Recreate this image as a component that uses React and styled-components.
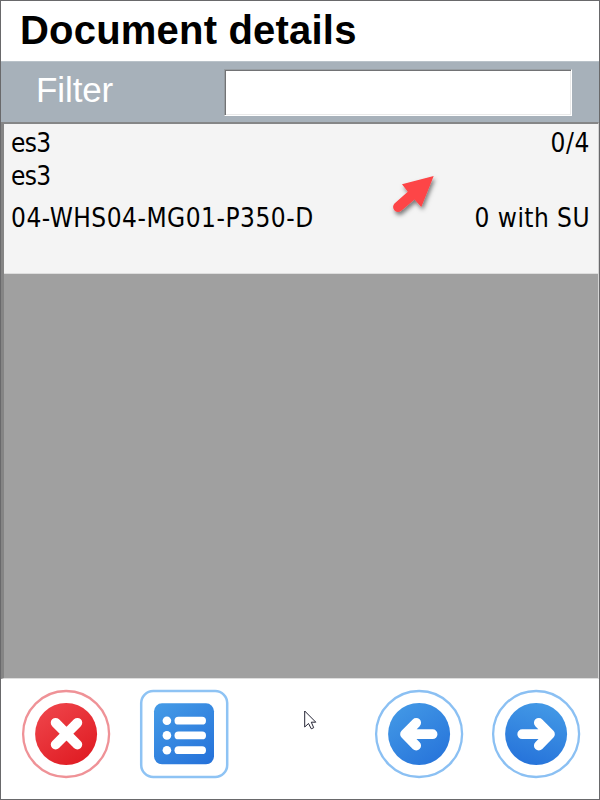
import React from "react";
import styled, { createGlobalStyle } from "styled-components";

const Global = createGlobalStyle`
  * { box-sizing: border-box; }
  body { margin: 0; background: #fff; }
`;

const Screen = styled.main`
  width: 600px;
  height: 800px;
  display: flex;
  flex-direction: column;
  border: 1px solid #69696b;
  background: #fff;
  overflow: hidden;
  position: relative;
  font-family: "Liberation Sans", Arial, sans-serif;
`;

const Header = styled.header`
  height: 60px;
  flex: none;
  padding-left: 19px;
`;

const Title = styled.h1`
  margin: 0;
  font-size: 40px;
  line-height: 59px;
  font-weight: 700;
  letter-spacing: 0.2px;
  color: #000;
  white-space: nowrap;
`;

const FilterBar = styled.section`
  height: 61px;
  flex: none;
  display: flex;
  align-items: flex-start;
  padding: 8px 27px 0 35px;
  background: #a7b1ba;
  border-top: 1px solid #b9c2c9;
`;

const FilterLabel = styled.label`
  width: 188px;
  font-size: 35px;
  line-height: 40px;
  letter-spacing: -0.1px;
  color: #fff;
`;

const FilterInput = styled.input`
  width: 348px;
  height: 47px;
  margin-top: -1px;
  padding: 0 8px;
  outline: 0;
  border-style: solid;
  border-width: 1px;
  border-color: #979da2 #fff #fff #979da2;
  border-radius: 0;
  background: #fff;
  box-shadow: inset 1px 1px 0 #727375, inset -1px -1px 0 #e9e9e9;
  font: 26px "DejaVu Sans Condensed", sans-serif;
`;

const List = styled.section`
  height: 557px;
  flex: none;
  background: #a0a0a0;
  border-top: 2px solid #858687;
  border-left: 3px solid #858585;
  border-right: 1px solid #d5d5d5;
  border-bottom: 1px solid #dedede;
`;

const Item = styled.article`
  height: 150px;
  padding: 3px 8px 0 7px;
  background: #f4f4f4;
  border-bottom: 1px solid #ddd;
`;

const Row = styled.div`
  display: flex;
  justify-content: space-between;
  height: ${(p) => p.$height}px;
  font-family: "DejaVu Sans Condensed", "DejaVu Sans", sans-serif;
  font-stretch: condensed;
  font-size: 26px;
  line-height: 33px;
  color: #000;
  white-space: nowrap;
`;

const Text = styled.span`
  letter-spacing: ${(p) => p.$spacing || 0}px;
`;

const Footer = styled.footer`
  flex: 1;
  display: flex;
  justify-content: space-between;
  align-items: flex-start;
  padding: 10px 18px 0 20px;
`;

const ButtonGroup = styled.div`
  display: flex;
  gap: ${(p) => p.$gap}px;
`;

const IconButton = styled.button`
  width: 90px;
  height: 90px;
  padding: 0;
  border: 0;
  background: none;
  svg { display: block; }
`;

const Pointer = styled.svg`
  position: absolute;
  left: ${(p) => p.$x}px;
  top: ${(p) => p.$y}px;
  overflow: visible;
`;

function Glyph({ kind }) {
  const id = `fill-${kind}`;
  const red = kind === "close";
  const list = kind === "list";
  return (
    <svg width="90" height="90" viewBox="0 0 90 90">
      <defs>
        <linearGradient id={id} x1={kind === "next" ? ".65" : ".15"} y1="0" x2={kind === "next" ? ".35" : ".85"} y2="1">
          <stop offset="0" stopColor={red ? "#ef454b" : "#4399e6"} />
          <stop offset="1" stopColor={red ? "#df1a21" : "#2673da"} />
        </linearGradient>
      </defs>
      {list ? (
        <>
          <rect x="2.2" y="2" width="86" height="86" rx="12" fill="#fff" stroke="#8ec3f4" strokeWidth="2.5" />
          <rect x="15" y="14.3" width="60" height="61" rx="8" fill={`url(#${id})`} />
          <g fill="#fff">
            {[31.7, 46.4, 61.2].map((y) => (
              <g key={y}>
                <circle cx="27.9" cy={y} r="4.3" />
                <rect x="35.5" y={y - 3.9} width="31.5" height="7.8" rx="3.9" />
              </g>
            ))}
          </g>
        </>
      ) : (
        <>
          <circle cx="45.1" cy="45" r="43" fill="#fff" stroke={red ? "#ef9297" : "#8bc0f3"} strokeWidth="2.3" />
          <circle cx="45.1" cy="45" r="31" fill={`url(#${id})`} />
          <g fill="none" stroke="#fff" strokeWidth="9.7" strokeLinecap="round" strokeLinejoin="round">
            {red && <path d="M34.6 33.8 56.4 55.6M56.4 33.8 34.6 55.6" />}
            {kind === "back" && <path d="M58.6 45.2H32M42.2 33.8 31 45.2 42.2 56.6" />}
            {kind === "next" && <path d="M31.2 45.2H58M47.8 33.8 59 45.2 47.8 56.6" />}
          </g>
        </>
      )}
    </svg>
  );
}

export default function App() {
  return (
    <>
      <Global />
      <Screen>
        <Header><Title>Document details</Title></Header>
        <FilterBar>
          <FilterLabel htmlFor="filter">Filter</FilterLabel>
          <FilterInput id="filter" />
        </FilterBar>
        <List>
          <Item>
            <Row $height={33}><Text $spacing={-0.7}>es3</Text><Text $spacing={0.6}>0/4</Text></Row>
            <Row $height={42}><Text $spacing={-0.7}>es3</Text></Row>
            <Row $height={33}><Text $spacing={0.5}>04-WHS04-MG01-P350-D</Text><Text $spacing={0.45}>0 with SU</Text></Row>
          </Item>
        </List>
        <Footer>
          <ButtonGroup $gap={28}>
            <IconButton aria-label="Close"><Glyph kind="close" /></IconButton>
            <IconButton aria-label="List"><Glyph kind="list" /></IconButton>
          </ButtonGroup>
          <ButtonGroup $gap={27}>
            <IconButton aria-label="Back"><Glyph kind="back" /></IconButton>
            <IconButton aria-label="Next"><Glyph kind="next" /></IconButton>
          </ButtonGroup>
        </Footer>
        <Pointer $x={391} $y={174} width="48" height="48" viewBox="392 175 48 48">
          <defs>
            <filter id="shadow" x="-30%" y="-30%" width="170%" height="170%">
              <feDropShadow dx="1.5" dy="3" stdDeviation="2" floodOpacity=".5" />
            </filter>
          </defs>
          <path filter="url(#shadow)" fill="#fd4446" d="M433.7 176 402 184.2 407.8 191.8 394.5 203.5C390.5 208 396 214.5 401 211L414.5 199.5 421.3 207Z" />
        </Pointer>
        <Pointer $x={303} $y={708.5} width="14" height="21" viewBox="304 710 14 21">
          <path d="M304.7 711V727L308.5 723.5 311.3 728.8 313.7 727.7 311.3 722.2H315.8Z" fill="#fff" stroke="#252535" strokeWidth="1" />
        </Pointer>
      </Screen>
    </>
  );
}
